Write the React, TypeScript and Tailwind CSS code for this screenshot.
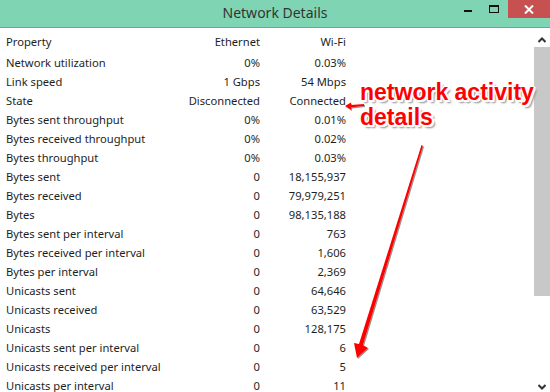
import React from 'react';

const rows: [string, string, string][] = [
  ['Network utilization', '0%', '0.03%'],
  ['Link speed', '1 Gbps', '54 Mbps'],
  ['State', 'Disconnected', 'Connected'],
  ['Bytes sent throughput', '0%', '0.01%'],
  ['Bytes received throughput', '0%', '0.02%'],
  ['Bytes throughput', '0%', '0.03%'],
  ['Bytes sent', '0', '18,155,937'],
  ['Bytes received', '0', '79,979,251'],
  ['Bytes', '0', '98,135,188'],
  ['Bytes sent per interval', '0', '763'],
  ['Bytes received per interval', '0', '1,606'],
  ['Bytes per interval', '0', '2,369'],
  ['Unicasts sent', '0', '64,646'],
  ['Unicasts received', '0', '63,529'],
  ['Unicasts', '0', '128,175'],
  ['Unicasts sent per interval', '0', '6'],
  ['Unicasts received per interval', '0', '5'],
  ['Unicasts per interval', '0', '11'],
];

const Row: React.FC<{ cells: [string, string, string] }> = ({ cells }) => (
  <div className="flex h-[19px] items-center">
    <div className="w-[160px] pl-[6px] whitespace-nowrap">{cells[0]}</div>
    <div className="w-[100px] text-right whitespace-nowrap">{cells[1]}</div>
    <div className="w-[86px] text-right whitespace-nowrap">{cells[2]}</div>
  </div>
);

const App: React.FC = () => {
  return (
    <div className="w-[550px] h-[392px] overflow-hidden bg-white relative font-['Segoe_UI','Noto_Sans',sans-serif] text-[11.2px] text-[#1e1e1e]">
      {/* title bar */}
      <div className="flex h-[27px] bg-[#7fd5b3]">
        <div className="flex-1 flex justify-center pl-[98px] pt-[2px] text-[14px] text-[#333]">Network Details</div>
        <div className="flex items-start">
          <div className="w-[28px] h-[18px] flex items-center justify-center">
            <div className="w-[8px] h-[2px] bg-[#111] mt-[3px] ml-[4px]" />
          </div>
          <div className="w-[28px] h-[18px] flex items-center justify-center">
            <div className="w-[10px] h-[8px] border border-[#111] border-t-2 mt-[-1px]" />
          </div>
          <div className="w-[42px] h-[18px] bg-[#c75050] flex items-center justify-center">
            <svg width="10" height="9" viewBox="0 0 10 9">
              <path d="M1 0.5 L9 8.5 M9 0.5 L1 8.5" stroke="#fff" strokeWidth="2" />
            </svg>
          </div>
        </div>
      </div>
      <div className="h-[1px] bg-[#a885a8]" />

      <div className="flex">
        <div className="flex-1 pt-[5px]">
          <div className="mb-[2px]">
            <Row cells={['Property', 'Ethernet', 'Wi-Fi']} />
          </div>
          {rows.map((r) => (
            <Row key={r[0]} cells={r} />
          ))}
        </div>

        {/* scrollbar */}
        <div className="w-[16px] flex flex-col items-center">
          <div className="h-[19px] flex items-center justify-center pt-[4px]">
            <svg width="8" height="6" viewBox="0 0 8 6">
              <path d="M0.5 5 L4 1.5 L7.5 5" fill="none" stroke="#333" strokeWidth="2" />
            </svg>
          </div>
          <div className="w-[16px] h-[249px] bg-[#c8c8c8]" />
          <div className="flex-1" />
          <div className="h-[12px] flex items-start justify-center">
            <svg width="8" height="6" viewBox="0 0 8 6">
              <path d="M0.5 1 L4 4.5 L7.5 1" fill="none" stroke="#333" strokeWidth="2" />
            </svg>
          </div>
        </div>
      </div>

      {/* annotation */}
      <div className="absolute left-[360px] top-[80px] font-['Liberation_Sans',Arial,sans-serif] font-bold text-[23px] leading-[25px] text-[#ff0000] [text-shadow:-1px_-1px_0_#fff,1px_-1px_0_#fff,-1px_1px_0_#fff,1px_1px_0_#fff,0_2px_0_#fff,2px_0_0_#fff,2px_2px_0_#fff,3px_3px_2px_#888]">
        <div>network activity</div>
        <div>details</div>
      </div>
      <svg className="absolute left-0 top-0 pointer-events-none" width="550" height="392" viewBox="0 0 550 392">
        <defs>
          <filter id="sh" x="-20%" y="-20%" width="140%" height="140%">
            <feDropShadow dx="1" dy="1" stdDeviation="0.6" floodColor="#777" floodOpacity="0.8" />
          </filter>
        </defs>
        <g filter="url(#sh)" fill="#ff0000">
          <polygon points="345,106 351,102.5 351,105 364,104 364,106 351,107.5 351,110" />
          <polygon points="421.5,145 423,146 363,345 368,348 357,358 354,343 359,344" />
        </g>
      </svg>
    </div>
  );
};

export default App;
